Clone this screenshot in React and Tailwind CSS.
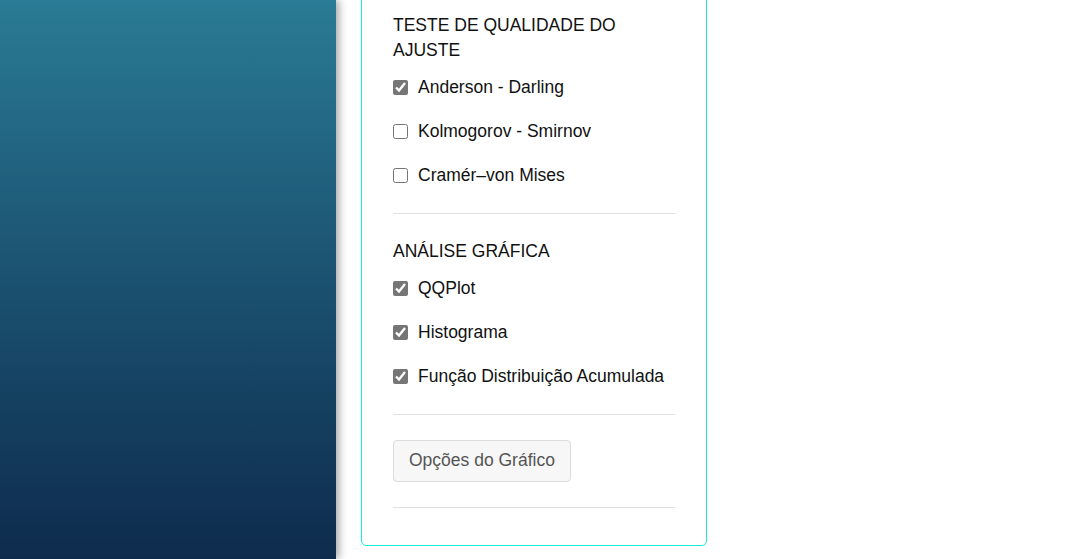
import { useState } from "react";

const testes = [
  { id: "ad", label: "Anderson - Darling", checked: true },
  { id: "ks", label: "Kolmogorov - Smirnov", checked: false },
  { id: "cvm", label: "Cramér–von Mises", checked: false },
];

const graficos = [
  { id: "qq", label: "QQPlot", checked: true },
  { id: "hist", label: "Histograma", checked: true },
  { id: "fda", label: "Função Distribuição Acumulada", checked: true },
];

function CheckRow({ item, onToggle }) {
  return (
    <label className="h-[44px] flex items-center cursor-pointer">
      <input
        type="checkbox"
        checked={item.checked}
        onChange={() => onToggle(item.id)}
        className="m-0 w-[15px] h-[15px] accent-[#767676]"
      />
      <span className="ml-[10px]">{item.label}</span>
    </label>
  );
}

export default function App() {
  const [tests, setTests] = useState(testes);
  const [graphs, setGraphs] = useState(graficos);

  const toggle = (setter) => (id) =>
    setter((prev) => prev.map((i) => (i.id === id ? { ...i, checked: !i.checked } : i)));

  return (
    <div
      className="flex h-[559px] overflow-hidden bg-white text-[17.5px] leading-[25px] text-[#111]"
      style={{ fontFamily: '"Liberation Sans", Arial, sans-serif' }}
    >
      {/* barra lateral */}
      <aside className="relative z-10 w-[336px] shrink-0 bg-gradient-to-b from-[#2a7b95] to-[#0e2b4d] shadow-[3px_0_8px_rgba(0,0,0,0.35)]" />

      <main className="pl-[25px]">
        <div className="-mt-[20px] w-[346px] border border-[#19ecd4] rounded-[5px] px-[31px] pt-[32px] pb-[37px]">
          <h4 className="m-0 font-normal">TESTE DE QUALIDADE DO AJUSTE</h4>
          <div className="mt-[2px]">
            {tests.map((t) => (
              <CheckRow key={t.id} item={t} onToggle={toggle(setTests)} />
            ))}
          </div>

          <hr className="mt-[15.5px] border-0 border-t border-[#e1e1e1]" />

          <h4 className="mt-[25px] font-normal">ANÁLISE GRÁFICA</h4>
          <div className="mt-[3px]">
            {graphs.map((g) => (
              <CheckRow key={g.id} item={g} onToggle={toggle(setGraphs)} />
            ))}
          </div>

          <hr className="mt-[15px] border-0 border-t border-[#e1e1e1]" />

          <button
            type="button"
            className="mt-[25px] h-[42px] px-[15px] rounded-[4px] border border-[#dcdcdc] bg-[#f7f7f7] text-[#555] hover:bg-[#eee]"
          >
            Opções do Gráfico
          </button>

          <hr className="mt-[25px] border-0 border-t border-[#e1e1e1]" />
        </div>
      </main>
    </div>
  );
}
